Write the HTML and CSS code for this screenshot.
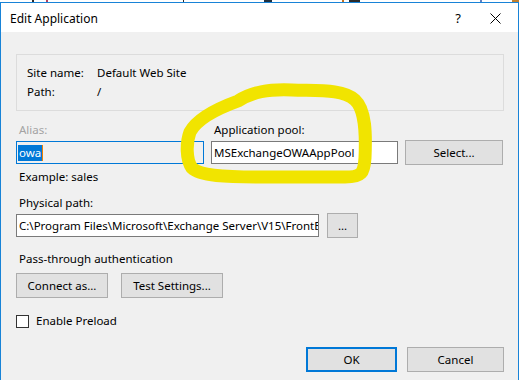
FILE: index.html
```html
<!DOCTYPE html>
<html>
<head>
<meta charset="utf-8">
<link rel="stylesheet" href="styles.css">
</head>
<body>
<div class="screen">
  <div class="backdrop">
    <span class="frag f1"></span><span class="frag f2"></span><span class="frag f3"></span><span class="frag f4"></span><span class="frag f5"></span><span class="frag f6"></span><span class="frag f7"></span><span class="frag f8"></span>
  </div>
  <div class="window">
    <div class="titlebar">
      <span class="title">Edit Application</span>
      <span class="help">?</span>
      <svg class="close" width="11" height="11" viewBox="0 0 11 11"><path d="M0.5 0.5 L10.5 10.5 M10.5 0.5 L0.5 10.5" stroke="#000" stroke-width="1" fill="none"/></svg>
    </div>
    <div class="content">
      <div class="group">
        <div class="info-row"><span class="key">Site name:</span><span>Default Web Site</span></div>
        <div class="info-row"><span class="key">Path:</span><span>/</span></div>
      </div>

      <div class="alias-grid">
        <div class="lbl disabled">Alias:</div>
        <div class="lbl">Application pool:</div>
        <div></div>
        <div class="input focused"><span class="sel">owa</span><span class="caret"></span></div>
        <input class="input" type="text" readonly value="MSExchangeOWAAppPool">
        <button class="btn select-btn">Select...</button>
      </div>
      <div class="lbl hint">Example: sales</div>

      <div class="lbl path-lbl">Physical path:</div>
      <div class="path-row">
        <input class="input path-input" type="text" readonly value="C:\Program Files\Microsoft\Exchange Server\V15\FrontEnd\HttpProxy\owa">
        <button class="btn dots-btn">...</button>
      </div>

      <div class="lbl pass-lbl">Pass-through authentication</div>
      <div class="btn-row">
        <button class="btn connect-btn">Connect as...</button>
        <button class="btn test-btn">Test Settings...</button>
      </div>

      <div class="check-row">
        <span class="checkbox"></span>
        <span class="check-lbl">Enable Preload</span>
      </div>

      <div class="footer">
        <button class="btn ok-btn">OK</button>
        <button class="btn cancel-btn">Cancel</button>
      </div>
    </div>
  </div>
  <svg class="scribble" width="519" height="380" viewBox="0 0 519 380">
    <path d="M238 101 C252 92, 268 89, 292 90 C318 91, 343 89, 355 100 C366 110, 366 135, 365 158 C364 173, 362 177, 345 177 L262 177 C226 177, 200 176, 192 168 C186 160, 186 143, 190 132 C197 119, 216 109, 238 101 Z" fill="none" stroke="#f1e400" stroke-width="13" stroke-linecap="round" stroke-linejoin="round"/>
  </svg>
</div>
</body>
</html>
```

FILE: styles.css
```css
* { box-sizing: border-box; }
html, body { margin: 0; padding: 0; }
body {
  width: 519px;
  height: 380px;
  overflow: hidden;
  font-family: "Noto Sans", "Open Sans", sans-serif;
  font-size: 11.5px;
  color: #000;
  background: #fff;
}
.screen {
  position: relative;
  width: 519px;
  height: 380px;
  overflow: hidden;
}
.backdrop {
  height: 2px;
  background: #fff;
  display: flex;
}
.frag { display: block; height: 2px; background: #2a2a2a; }
.f1 { width: 2px; margin-left: 32px; }
.f2 { width: 2px; margin-left: 12px; background: #b04060; }
.f3 { width: 2px; margin-left: 135px; }
.f4 { width: 9px; margin-left: 80px; background: #203040; }
.f5 { width: 2px; margin-left: 70px; background: #c07020; }
.f6 { width: 12px; margin-left: 5px; }
.f7 { width: 2px; margin-left: 120px; background: #6080c0; }
.f8 { width: 8px; margin-left: 30px; background: #c08030; }

.window {
  border: 1px solid #1883d7;
  border-bottom: none;
  height: 378px;
  background: #f0f0f0;
  display: flex;
  flex-direction: column;
}
.titlebar {
  height: 29px;
  background: #fff;
  display: flex;
  align-items: center;
  padding-left: 9px;
  padding-top: 1px;
  font-size: 12px;
}
.title { flex: 1; }
.help { font-size: 13px; margin-right: 29px; }
.close { margin-right: 17px; display: block; }

.content {
  padding: 22px 14px 0 15px;
  display: flex;
  flex-direction: column;
}
.group {
  border: 1px solid #dcdcdc;
  height: 57px;
  padding: 10px 0 0 10px;
  display: flex;
  flex-direction: column;
  gap: 3px;
}
.info-row { display: flex; line-height: 16px; }
.key { width: 70px; }

.lbl { line-height: 16px; padding-left: 3px; }
.disabled { color: #a3a3a3; }

.alias-grid {
  margin-top: 11px;
  display: grid;
  grid-template-columns: 188px 187px 98px;
  column-gap: 7px;
  row-gap: 2px;
  align-items: center;
}

.input {
  display: block;
  width: 100%;
  height: 23px;
  margin: 0;
  border: 1px solid #7a7a7a;
  border-radius: 0;
  background: #fff;
  padding: 0 0 0 2px;
  font-family: inherit;
  font-size: 11.5px;
  color: #000;
  line-height: 20px;
  white-space: nowrap;
  overflow: hidden;
  outline: none;
}
.focused {
  border-color: #0078d7;
  background: #f0f0f0;
  display: flex;
  align-items: center;
  padding-left: 1px;
}
.sel {
  background: #0078d7;
  color: #fff;
  line-height: 16px;
  padding: 0 1px;
}
.caret { width: 1px; height: 16px; background: #f08000; }

.btn {
  font-family: inherit;
  font-size: 11.5px;
  color: #000;
  background: #e1e1e1;
  border: 1px solid #adadad;
  border-radius: 0;
  height: 25px;
  padding: 0;
  margin: 0;
}
.select-btn { width: 98px; }

.hint { margin-top: 4px; }
.path-lbl { margin-top: 10px; }
.path-row {
  margin-top: 2px;
  display: flex;
  align-items: center;
  gap: 8px;
}
.path-input { width: 303px; flex: none; }
.dots-btn { width: 31px; }

.pass-lbl { margin-top: 13px; }
.btn-row {
  margin-top: 6px;
  display: flex;
  gap: 13px;
}
.connect-btn { width: 92px; }
.test-btn { width: 102px; }

.check-row {
  margin-top: 15px;
  display: flex;
  align-items: center;
  line-height: 16px;
}
.checkbox {
  width: 13px;
  height: 13px;
  border: 1px solid #333;
  background: #fff;
  margin-right: 7px;
}

.footer {
  margin-top: 18px;
  display: flex;
  justify-content: flex-end;
  gap: 10px;
}
.ok-btn { width: 91px; border: 2px solid #0078d7; }
.cancel-btn { width: 97px; }

.scribble {
  position: absolute;
  left: 0;
  top: 0;
  pointer-events: none;
}
```
